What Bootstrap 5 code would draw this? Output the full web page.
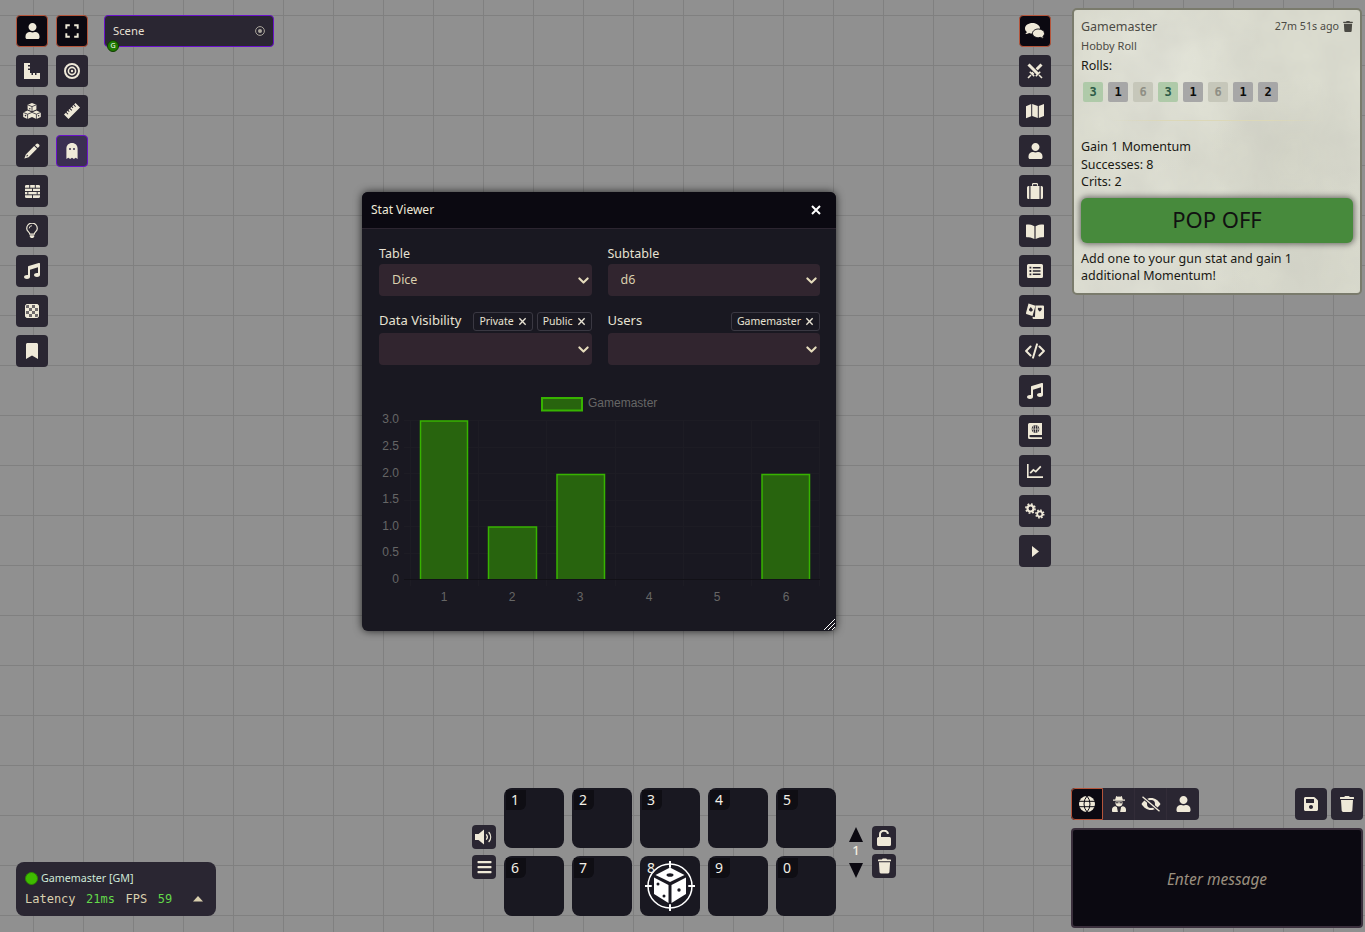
<!DOCTYPE html>
<html lang="en">
<head>
    <meta charset="UTF-8">
    <title>Stat Viewer</title>
    <link href="https://cdn.jsdelivr.net/npm/bootstrap@5.3.2/dist/css/bootstrap.min.css" rel="stylesheet">
    <script src="https://cdn.jsdelivr.net/npm/bootstrap@5.3.2/dist/js/bootstrap.bundle.min.js"></script>
    <style>
        html, body { height: 100%; overflow: hidden; }
        body {
            font-family: "Noto Sans", "Open Sans", sans-serif;
            font-size: 13px;
            color: #efe9d8;
            background-color: #909090;
            background-image:
                linear-gradient(to right, #808080 1px, transparent 1px),
                linear-gradient(to bottom, #808080 1px, transparent 1px);
            background-size: 50px 50px;
            background-position: 33px 15px;
        }
        .ico { display: block; fill: currentColor; --hole: #2a2632; }
        .hud-root { height: 932px; }
        .top-bar { padding-right: 3px; }
        .tool-area { padding: 15px 0 0 16px; gap: 8px; }
        .tool-col { gap: 8px; width: 32px; }
        .tool-btn {
            width: 32px; height: 32px;
            background: #2a2632;
            border-radius: 4px;
            color: #efe9d8;
            border: 0;
            padding: 0;
        }
        .tool-btn.is-on { background: #0b0911; border: 1px solid #b5543a; }
        .tool-btn.is-on .ico { --hole: #0b0911; }
        .tool-btn.is-layer { background: #3b2f52; border: 1px solid #6a11cb; }
        .tool-btn.is-layer .ico { --hole: #3b2f52; }
        .scene-box {
            width: 170px; height: 32px;
            margin-left: 8px;
            background: #2a2632;
            border: 1px solid #6a11cb;
            border-radius: 4px;
            padding: 0 8px;
            font-size: 11.3px;
            color: #e4dfd0;
        }
        .scene-pin {
            position: absolute; left: 2px; bottom: -6px;
            width: 12px; height: 12px;
            border-radius: 50%;
            background: #1e7a00;
            border: 1px solid #0f3d00;
            color: #fff;
            font-size: 7px;
            line-height: 10px;
            text-align: center;
        }
        .side-col { gap: 8px; width: 32px; margin-top: 15px; margin-right: 21px; }
        .chat-card {
            width: 290px; height: 287px;
            margin-top: 8px;
            padding: 8px 7px 0 7px;
            border: 2px solid #7a7b6c;
            border-radius: 5px;
            color: #191813;
            font-size: 12.5px;
            line-height: 17.5px;
            background-color: #dcddd0;
            background-image:
                url("data:image/svg+xml,%3csvg xmlns='http://www.w3.org/2000/svg' width='290' height='287'%3e%3cfilter id='n'%3e%3cfeTurbulence type='fractalNoise' baseFrequency='.02' numOctaves='4'/%3e%3cfeColorMatrix values='0 0 0 0 .55 0 0 0 0 .55 0 0 0 0 .5 0 0 0 .5 -.1'/%3e%3c/filter%3e%3crect width='290' height='287' filter='url(%23n)'/%3e%3c/svg%3e"),
                radial-gradient(circle at 30% 20%, #e4e5da 0, transparent 35%),
                radial-gradient(circle at 75% 50%, #d2d3c6 0, transparent 30%),
                radial-gradient(circle at 20% 85%, #e2e3d8 0, transparent 35%),
                radial-gradient(circle at 85% 90%, #d6d7ca 0, transparent 30%);
        }
        .msg-sender { font-size: 12.5px; color: #4b4a44; }
        .msg-time { font-size: 10.7px; color: #4b4a44; }
        .msg-flavor { font-size: 11px; color: #4b4a44; margin-top: 2px; line-height: 16px; }
        .roll-line { margin-top: 3px; }
        .dice-row { gap: 5px; margin: 8px 0 0 2px; }
        .die-chip {
            width: 20px; height: 20px;
            border-radius: 2px;
            font-family: "DejaVu Sans Mono", monospace;
            font-weight: 700;
            font-size: 12px;
            line-height: 20px;
            text-align: center;
            background: #a7a7a7;
            color: #0c0c0c;
        }
        .die-chip.is-hit { background: #afcaa9; color: #2e5c48; }
        .die-chip.is-dim { background: #c6c7ba; color: #8f8f85; }
        .msg-rule {
            height: 1px;
            margin: 18px 30px 17px 30px;
            background: linear-gradient(to right, transparent, #dcd8b8 25%, #dcd8b8 75%, transparent);
        }
        .pop-btn {
            display: block; width: 100%; height: 45px;
            margin: 7px 0 7px 0;
            background: #478a3c;
            border: 0;
            border-radius: 6px;
            color: #111;
            font-size: 22px;
            box-shadow: 0 0 6px 1px rgba(0,0,0,.55);
        }
        .stat-window {
            position: absolute; left: 362px; top: 192px;
            width: 474px; height: 439px;
            background: #191821;
            border-radius: 6px;
            box-shadow: 0 0 8px rgba(0,0,0,.75);
            overflow: hidden;
        }
        .stat-head {
            height: 37px;
            padding: 0 9px;
            background: #0b0911;
            border-bottom: 1px solid #2c2530;
            font-size: 12px;
            color: #efe9d8;
        }
        .close-x { width: 22px; height: 22px; color: #fff; }
        .stat-body { padding: 16px 16px 0 17px; }
        .stat-row { --bs-gutter-x: 16px; margin-bottom: 14px; }
        .field-label { font-size: 12.5px; height: 17px; line-height: 17px; color: #e7e2d3; margin-bottom: 2px; }
        .field-label.is-tags { height: 22px; line-height: 20px; margin: 0 0 1px 0; font-size: 13px; align-items: flex-start; }
        .stat-select.form-select {
            height: 32px;
            padding: 1px 24px 0 13px;
            background-color: #31252f;
            border: 0;
            border-radius: 4px;
            color: #d9cfae;
            font-size: 12.5px;
            font-family: inherit;
            background-size: 11px 11px;
            background-position: right 3px center;
            background-image: url("data:image/svg+xml,%3csvg xmlns='http://www.w3.org/2000/svg' viewBox='0 0 16 16'%3e%3cpath fill='none' stroke='%23e6dcbc' stroke-linecap='round' stroke-linejoin='round' stroke-width='3' d='m2 5 6 6 6-6'/%3e%3c/svg%3e");
        }
        .tag-chip {
            height: 19px;
            margin-top: 2px;
            padding: 0 5px;
            border: 1px solid #3a3842;
            border-radius: 3px;
            font-size: 10.5px;
            line-height: 17px;
            color: #e7e2d3;
            gap: 4px;
        }
        .chart-svg { display: block; position: absolute; left: 0; top: 192px; }
        .chart-svg text { font-family: "Liberation Sans", sans-serif; font-size: 12px; fill: #666; }
        .grip {
            position: absolute; right: 1px; bottom: 1px;
            color: #fff;
        }
        .bottom-bar { padding: 0 2px 4px 0; }
        .status-box {
            width: 200px; height: 54px;
            margin: 0 0 12px 16px;
            padding: 8px 9px 0 9px;
            background: #2a2632;
            border-radius: 8px;
            font-size: 10.7px;
        }
        .status-dot { width: 13px; height: 13px; border-radius: 50%; background: #3fbb00; border: 1px solid #2b8a00; margin-right: 3px; }
        .status-name { color: #cfe8d8; }
        .status-stats {
            margin-top: 4px;
            gap: 10.5px;
            font-family: "DejaVu Sans Mono", monospace;
            font-size: 12px;
            color: #d9cfae;
        }
        .status-stats b { font-weight: 400; color: #63d94a; }
        .hot-zone { margin: 0 0 12px 256px; }
        .mini-col { gap: 6px; margin-right: 8px; margin-bottom: 37px; }
        .mini-btn { width: 24px; height: 24px; background: #2a2632; border-radius: 4px; color: #efe9d8; }
        .slot-grid { display: grid; grid-template-columns: repeat(5, 60px); grid-auto-rows: 60px; gap: 8px; }
        .hot-slot {
            position: relative;
            background: #191821;
            border-radius: 8px;
            overflow: hidden;
        }
        .slot-num {
            position: absolute; left: 2px; top: 2px;
            width: 20px; height: 20px;
            padding-left: 5px;
            background: #0f0e14;
            border-radius: 0 0 6px 0;
            font-size: 14px;
            line-height: 20px;
            color: #f2efe6;
            z-index: 1;
        }
        .slot-num.is-bare { background: none; }
        .slot-img { position: absolute; left: 5px; top: 5px; color: #fff; }
        .page-col { width: 20px; margin: 0 6px 38px 10px; }
        .page-num { font-size: 13px; line-height: 21px; font-weight: 500; color: #f2eee0; margin-top: -2px; margin-bottom: 2px; }
        .page-arrow { color: #0b0911; }
        .lock-col { gap: 4px; margin-bottom: 38px; }
        .chat-zone { margin-left: auto; width: 292px; }
        .tab-group { background: #2a2632; border-radius: 4px; height: 32px; }
        .tab-item { width: 32px; height: 32px; color: #efe9d8; border-right: 1px solid #322c38; }
        .tab-item:last-child { border-right: 0; }
        .tab-item.is-on { background: #0b0911; border: 1px solid #b5543a; border-radius: 4px 0 0 4px; }
        .tab-item.is-on .ico { --hole: #0b0911; }
        .msg-input {
            height: 100px;
            margin-top: 8px;
            padding-top: 3px;
            background: #0b0911;
            border: 2px solid #3a2f3c;
            border-radius: 4px;
            font-style: italic;
            font-size: 15.5px;
            color: #9a8f7f;
        }
    </style>
</head>
<body>

<svg width="0" height="0" class="position-absolute">
  <defs>
    <symbol id="i-user" viewBox="0 0 448 512"><path d="M224 256c70.7 0 128-57.3 128-128S294.7 0 224 0 96 57.3 96 128s57.3 128 128 128zm89.6 32h-16.7c-22.2 10.2-46.9 16-72.9 16s-50.6-5.8-72.9-16h-16.7C60.2 288 0 348.2 0 422.4V464c0 26.5 21.5 48 48 48h352c26.5 0 48-21.5 48-48v-41.6c0-74.2-60.2-134.4-134.4-134.4z"/></symbol>
    <symbol id="i-trash" viewBox="0 0 448 512"><path d="M432 32H312l-9.4-18.7A24 24 0 0 0 281.1 0H166.8a23.72 23.72 0 0 0-21.4 13.3L136 32H16A16 16 0 0 0 0 48v32a16 16 0 0 0 16 16h416a16 16 0 0 0 16-16V48a16 16 0 0 0-16-16zM53.2 467a48 48 0 0 0 47.9 45h245.8a48 48 0 0 0 47.9-45L416 128H32z"/></symbol>
    <symbol id="i-bars" viewBox="0 0 448 512"><path d="M16 132h416c8.837 0 16-7.163 16-16V76c0-8.837-7.163-16-16-16H16C7.163 60 0 67.163 0 76v40c0 8.837 7.163 16 16 16zm0 160h416c8.837 0 16-7.163 16-16v-40c0-8.837-7.163-16-16-16H16c-8.837 0-16 7.163-16 16v40c0 8.837 7.163 16 16 16zm0 160h416c8.837 0 16-7.163 16-16v-40c0-8.837-7.163-16-16-16H16c-8.837 0-16 7.163-16 16v40c0 8.837 7.163 16 16 16z"/></symbol>
    <symbol id="i-music" viewBox="0 0 512 512"><path d="M470.38 1.51L150.41 96A32 32 0 0 0 128 126.51v261.41A139 139 0 0 0 96 384c-53 0-96 28.66-96 64s43 64 96 64 96-28.66 96-64V214.32l256-75v184.61a138.4 138.4 0 0 0-32-3.93c-53 0-96 28.66-96 64s43 64 96 64 96-28.65 96-64V32a32 32 0 0 0-41.62-30.49z"/></symbol>
    <symbol id="i-bookmark" viewBox="0 0 384 512"><path d="M0 512V48C0 21.49 21.49 0 48 0h288c26.51 0 48 21.49 48 48v464L192 400 0 512z"/></symbol>
    <symbol id="i-save" viewBox="0 0 448 512"><path d="M433.941 129.941l-83.882-83.882A48 48 0 0 0 316.118 32H48C21.49 32 0 53.49 0 80v352c0 26.51 21.49 48 48 48h352c26.51 0 48-21.49 48-48V163.882a48 48 0 0 0-14.059-33.941zM224 416c-35.346 0-64-28.654-64-64 0-35.346 28.654-64 64-64s64 28.654 64 64c0 35.346-28.654 64-64 64zm96-304.52V212c0 6.627-5.373 12-12 12H76c-6.627 0-12-5.373-12-12V108c0-6.627 5.373-12 12-12h228.52c3.183 0 6.235 1.264 8.485 3.515l3.48 3.48A11.996 11.996 0 0 1 320 111.48z"/></symbol>
    <symbol id="i-expand" viewBox="0 0 16 16"><path fill="none" stroke="currentColor" stroke-width="2.2" d="M1.5 5.5v-4h4M10.5 1.5h4v4M14.5 10.5v4h-4M5.5 14.5h-4v-4"/></symbol>
    <symbol id="i-ruler-l" viewBox="0 0 16 16"><path d="M0 0h6v2H4v1.500h2v2H4V7h2v3h1.500v2H9v-2h2v2h1.500v-2H16v6H0z"/></symbol>
    <symbol id="i-target" viewBox="0 0 16 16"><circle cx="8" cy="8" r="7" fill="none" stroke="currentColor" stroke-width="2"/><circle cx="8" cy="8" r="3.6" fill="none" stroke="currentColor" stroke-width="1.6"/><circle cx="8" cy="8" r="1.2"/></symbol>
    <symbol id="i-cubes" viewBox="0 0 18 16"><path d="M9 0l4.4 1.8v4.6L9 8.2 4.6 6.4V1.8z"/><path d="M4.6 7.6L9 9.4V14l-4.4 2L.2 14V9.4z"/><path d="M13.4 7.6L17.8 9.4V14l-4.4 2L9 14V9.4z"/><path fill="none" stroke="var(--hole)" stroke-width=".8" d="M4.6 1.8L9 3.6l4.4-1.8M9 3.6v4.6M.2 9.4l4.4 1.8L9 9.4M4.6 11.2V16M9 9.4l4.4 1.8 4.4-1.8M13.4 11.2V16"/><circle cx="2.5" cy="12.6" r=".8" fill="var(--hole)"/><circle cx="15.6" cy="12.8" r=".8" fill="var(--hole)"/><circle cx="6.8" cy="5.8" r=".7" fill="var(--hole)"/></symbol>
    <symbol id="i-ruler-d" viewBox="0 0 16 16"><path d="M11.5 0L16 4.5 4.5 16 0 11.5l1.8-1.8 1.9 1.9.7-.7-1.9-1.9 1.2-1.2 1.2 1.2.7-.7-1.2-1.2 1.2-1.2 1.9 1.9.7-.7-1.9-1.9 1.2-1.2 1.2 1.2.7-.7-1.2-1.2 1.2-1.2 1.9 1.9.7-.7-1.9-1.9z"/></symbol>
    <symbol id="i-pencil" viewBox="0 0 16 16"><path d="M11 2.2l1.2-1.2a1.6 1.6 0 0 1 2.2 0l.6.6a1.6 1.6 0 0 1 0 2.2L13.8 5z"/><path fill-rule="evenodd" d="M10.2 3l2.8 2.8-8.4 8.4L.4 15.6l1.4-4.2zM3 11.6l-.7 2 2-.7z"/></symbol>
    <symbol id="i-ghost" viewBox="0 0 16 16"><path d="M8 0C4.6 0 2.4 2.4 2.4 5.6V16l1.9-1.3L6.1 16 8 14.7 9.9 16l1.8-1.3 1.9 1.3V5.6C13.6 2.4 11.4 0 8 0z"/><circle cx="6" cy="6" r="1" fill="var(--hole)"/><circle cx="10" cy="6" r="1" fill="var(--hole)"/></symbol>
    <symbol id="i-brick" viewBox="0 0 16 16"><path d="M1.5 1h13A1.5 1.5 0 0 1 16 2.5v11a1.5 1.5 0 0 1-1.5 1.5h-13A1.5 1.5 0 0 1 0 13.500v-11A1.500 1.500 0 0 1 1.500 1z"/><path fill="none" stroke="var(--hole)" d="M0 4.500h16M0 8h16M0 11.500h16M5 1v3.500M11 1v3.500M8 4.500V8M3 8v3.500M13 8v3.500M8 11.500V15"/></symbol>
    <symbol id="i-bulb" viewBox="0 0 12 16"><path fill="none" stroke="currentColor" stroke-width="1.200" d="M3.800 11.200c0-1.800-3.100-3-3.100-5.800a5.300 5.300 0 0 1 10.600 0c0 2.800-3.100 4-3.100 5.800z"/><path d="M3.800 12.300h4.400v1.300l-1 1.500H4.800l-1-1.500z"/><path fill="none" stroke="currentColor" stroke-width=".9" d="M3.200 5.400A2.800 2.800 0 0 1 6 2.700"/></symbol>
    <symbol id="i-checker" viewBox="0 0 14 14"><rect x=".5" y=".5" width="13" height="13" rx="1.500" fill="none" stroke="currentColor"/><path d="M1 1h3v3H1zM7 1h3v3H7zM4 4h3v3H4zM10 4h3v3h-3zM1 7h3v3H1zM7 7h3v3H7zM4 10h3v3H4zM10 10h3v3h-3z" opacity=".35"/><path d="M4 1h3v3H4zM10 1h3v3h-3zM1 4h3v3H1zM7 4h3v3H7zM4 7h3v3H4zM10 7h3v3h-3zM1 10h3v3H1zM7 10h3v3H7z"/></symbol>
    <symbol id="i-chat" viewBox="0 0 20 16"><path d="M7.500 0C3.400 0 0 2.400 0 5.400c0 1.400.7 2.600 1.900 3.600-.3.800-.9 1.500-1.600 2.100 1.500 0 2.700-.5 3.700-1.200 1.100.4 2.300.7 3.500.7 4.100 0 7.500-2.400 7.500-5.200S11.600 0 7.500 0z"/><path stroke="var(--hole)" stroke-width="1" d="M13.500 6c-3 0-6 1.700-6 4.400 0 2.500 2.800 4.300 6 4.300.7 0 1.500-.1 2.200-.3.900.7 2 1.200 3.500 1.200-.7-.6-1.200-1.300-1.400-2 1-.8 1.700-1.900 1.700-3.200C19.500 7.700 16.500 6 13.500 6z"/></symbol>
    <symbol id="i-swords" viewBox="0 0 16 16">
      <path fill="none" stroke="currentColor" stroke-width="3" d="M14.500 1.500L5 11"/>
      <path fill="none" stroke="currentColor" stroke-width="1.600" d="M2.800 8.800l4.400 4.400M4 12l-3 3"/>
      <path fill="none" stroke="var(--hole)" stroke-width="4.600" d="M1.500 1.500L11 11"/>
      <path fill="none" stroke="currentColor" stroke-width="3" d="M1.500 1.500L11 11"/>
      <path fill="none" stroke="currentColor" stroke-width="1.600" d="M13.200 8.800l-4.400 4.400M12 12l3 3"/>
    </symbol>
    <symbol id="i-map" viewBox="0 0 18 16"><path d="M0 3.200L5.200 1v12.200L0 15.200zM6.200 1l5.600 2v12l-5.600-2zM12.800 3L18 .9v12L12.800 15z"/></symbol>
    <symbol id="i-case" viewBox="0 0 16 16"><path d="M5 2.800V1.300C5 .6 5.600 0 6.300 0h3.400c.7 0 1.300.6 1.300 1.300v1.500H9.900V1.200H6.100v1.600z"/><path d="M3.500 3H12.500V16H3.500zM2.300 3v13H1.500A1.500 1.500 0 0 1 0 14.500v-10A1.500 1.500 0 0 1 1.500 3zM13.700 3h.8A1.500 1.500 0 0 1 16 4.500v10a1.500 1.500 0 0 1-1.500 1.500h-.8z"/></symbol>
    <symbol id="i-book" viewBox="0 0 18 15"><path d="M8.400 2.200v12.800C6 13.500 3 13.200.6 13.200.3 13.200 0 13 0 12.600V1c0-.3.300-.6.600-.6 3 0 6 .4 7.800 1.800zM9.600 2.200v12.800c2.400-1.500 5.400-1.800 7.800-1.800.3 0 .6-.2.600-.6V1c0-.3-.3-.6-.6-.6-3 0-6 .4-7.800 1.800z"/></symbol>
    <symbol id="i-list" viewBox="0 0 16 14"><path fill-rule="evenodd" d="M1.500 0h13A1.500 1.500 0 0 1 16 1.500v11a1.500 1.500 0 0 1-1.500 1.500h-13A1.500 1.500 0 0 1 0 12.500v-11A1.500 1.500 0 0 1 1.500 0zM2.500 2.800v1.800h1.800V2.800zM5.800 3v1.400h7.700V3zM2.500 6.100v1.800h1.800V6.100zM5.800 6.300v1.400h7.700V6.300zM2.500 9.400v1.800h1.800V9.400zM5.800 9.600V11h7.700V9.600z"/></symbol>
    <symbol id="i-cards" viewBox="0 0 18 16"><path d="M2.500.6l7 2.200-3 10.200-6.300-2-.2-1z"/><path d="M9.600 2.500H17a1 1 0 0 1 1 1V15a1 1 0 0 1-1 1H7.600a1 1 0 0 1-1-1v-1.200l1.200.3a1 1 0 0 0 1.200-.7z"/><path fill="var(--hole)" d="M4.800 4l1.700 2.200c.5.700.3 1.600-.4 1.800-.3.100-.6 0-.8-.1l.3 1-1.300-.4.300-.7c-.3.200-.6.200-.9.100-.8-.3-.9-1.100-.5-1.800zM13.800 5.200c.7-.8 2-.3 2 .7 0 .8-1 1.600-2 2.600-1-.9-2-1.800-2-2.600 0-1 1.300-1.500 2-.7z"/></symbol>
    <symbol id="i-code" viewBox="0 0 18 14"><path fill="none" stroke="currentColor" stroke-width="1.800" stroke-linecap="round" stroke-linejoin="round" d="M5 3L1 7l4 4M13 3l4 4-4 4M10.800 1L7.200 13"/></symbol>
    <symbol id="i-atlas" viewBox="0 0 14 16"><path fill-rule="evenodd" d="M1.500 0H14v12H2.500a1.100 1.100 0 0 0 0 2.200H14V16H1.500A1.500 1.500 0 0 1 0 14.500v-13A1.500 1.500 0 0 1 1.500 0zM7.500 2.300a3.800 3.800 0 1 0 0 7.600 3.800 3.800 0 0 0 0-7.600z"/><path fill="none" stroke="currentColor" stroke-width=".7" d="M7.500 2.500v7.200M4 6.100h7M5.800 3a6 6 0 0 0 0 6.200M9.200 3a6 6 0 0 1 0 6.200"/></symbol>
    <symbol id="i-chart" viewBox="0 0 16 14"><path d="M0 0h1.600v12.200H16V14H0z"/><path fill="none" stroke="currentColor" stroke-width="1.700" d="M3.200 9.200l3.200-3.400 2.400 1.800L13.800 2.400"/></symbol>
    <symbol id="i-cogs" viewBox="0 0 20 16"><circle cx="5.500" cy="5.500" r="3" fill="none" stroke="currentColor" stroke-width="2.200"/><circle cx="5.500" cy="5.500" r="4.600" fill="none" stroke="currentColor" stroke-width="1.600" stroke-dasharray="1.800 1.800"/><circle cx="14.800" cy="11" r="2.600" fill="none" stroke="currentColor" stroke-width="1.800"/><circle cx="14.800" cy="11" r="3.900" fill="none" stroke="currentColor" stroke-width="1.600" stroke-dasharray="1.530 1.530"/></symbol>
    <symbol id="i-globe" viewBox="0 0 16 16"><circle cx="8" cy="8" r="8"/><path fill="none" stroke="var(--hole)" stroke-width="1" d="M0 5.300h16M0 10.700h16M8 0a12 12 0 0 0-3 8 12 12 0 0 0 3 8 12 12 0 0 0 3-8 12 12 0 0 0-3-8z"/></symbol>
    <symbol id="i-secret" viewBox="0 0 14 16"><path d="M4.200 0L5.800 .8 7 .4l1.200.4L9.800 0l1 3.400H13v1.300H1V3.400h2.200z"/><path d="M3.500 5.500h7v1.800c0 2-1.500 3.300-3.500 3.300S3.500 9.300 3.500 7.300z"/><path d="M3.400 10.200l1.500.7 1 5.100H1.100A1 1 0 0 1 0 15v-1.400c0-1.800 1.500-3.400 3.400-3.400zM10.600 10.200c1.900 0 3.400 1.600 3.400 3.400V15a1 1 0 0 1-1.100 1H8.100l1-5.100z"/><path fill="var(--hole)" d="M3.900 6.200h2.600v1H3.900zM7.500 6.200h2.600v1H7.500z"/></symbol>
    <symbol id="i-eyeoff" viewBox="0 0 20 16"><path fill-rule="evenodd" d="M10 2c4 0 7.500 2.600 9.500 6-2 3.400-5.500 6-9.500 6s-7.500-2.600-9.500-6c2-3.400 5.500-6 9.500-6zm0 2a4 4 0 1 0 0 8 4 4 0 0 0 0-8z"/><path fill="none" stroke="var(--hole)" stroke-width="3.200" d="M1.500 0.800l17 14.400"/><path fill="none" stroke="currentColor" stroke-width="1.300" d="M1.500 0.800l17 14.400"/></symbol>
    <symbol id="i-volume" viewBox="0 0 18 16"><path d="M0 5h3.500L9 .6v14.800L3.500 11H0z"/><path fill="none" stroke="currentColor" stroke-width="1.300" stroke-linecap="round" d="M11.500 5.800a3.500 3.500 0 0 1 0 4.400M14 3.500a7 7 0 0 1 0 9"/></symbol>
    <symbol id="i-lock" viewBox="0 0 14 16"><path d="M1.500 7h11A1.500 1.500 0 0 1 14 8.500v6a1.500 1.500 0 0 1-1.500 1.500h-11A1.500 1.500 0 0 1 0 14.500v-6A1.500 1.500 0 0 1 1.500 7z"/><path fill="none" stroke="currentColor" stroke-width="2" d="M3 7V4.500a4 3.500 0 0 1 8-.6"/></symbol>
    <symbol id="i-d6" viewBox="0 0 50 50">
      <circle cx="25" cy="25" r="22" fill="none" stroke="currentColor" stroke-width="1.500"/>
      <path fill="none" stroke="currentColor" stroke-width="2" stroke-linecap="round" d="M25 0v6M25 44v6M0 25h6M44 25h6"/>
      <path d="M25 6.500l14.500 7.500L25 21 10.500 14z"/>
      <path d="M9 16.500l14.500 7.500v18L9 33z"/>
      <path d="M26.500 24L41 16.500V33l-14.500 9z"/>
      <ellipse cx="25" cy="14" rx="3.500" ry="1.800" fill="#191821"/>
      <circle cx="13" cy="23" r="1.500" fill="#191821"/><circle cx="19" cy="35" r="1.500" fill="#191821"/>
      <circle cx="34" cy="29" r="1.700" fill="#191821"/>
    </symbol>
    <symbol id="i-x" viewBox="0 0 10 10"><path fill="none" stroke="currentColor" stroke-width="1.500" d="M1.500 1.500l7 7M8.500 1.500l-7 7"/></symbol>
  </defs>
</svg>

<div class="hud-root d-flex flex-column justify-content-between">
  <div class="top-bar d-flex justify-content-between align-items-start">
    <div class="tool-area d-flex">
      <div class="tool-col d-flex flex-column">
        <div class="tool-btn is-on d-flex align-items-center justify-content-center"><svg class="ico" width="15" height="16"><use href="#i-user"/></svg></div>
        <div class="tool-btn d-flex align-items-center justify-content-center"><svg class="ico" width="16" height="16"><use href="#i-ruler-l"/></svg></div>
        <div class="tool-btn d-flex align-items-center justify-content-center"><svg class="ico" width="18" height="16"><use href="#i-cubes"/></svg></div>
        <div class="tool-btn d-flex align-items-center justify-content-center"><svg class="ico" width="16" height="16"><use href="#i-pencil"/></svg></div>
        <div class="tool-btn d-flex align-items-center justify-content-center"><svg class="ico" width="15" height="15"><use href="#i-brick"/></svg></div>
        <div class="tool-btn d-flex align-items-center justify-content-center"><svg class="ico" width="12" height="16"><use href="#i-bulb"/></svg></div>
        <div class="tool-btn d-flex align-items-center justify-content-center"><svg class="ico" width="16" height="16"><use href="#i-music"/></svg></div>
        <div class="tool-btn d-flex align-items-center justify-content-center"><svg class="ico" width="14" height="14"><use href="#i-checker"/></svg></div>
        <div class="tool-btn d-flex align-items-center justify-content-center"><svg class="ico" width="12" height="16"><use href="#i-bookmark"/></svg></div>
      </div>
      <div class="tool-col d-flex flex-column">
        <div class="tool-btn is-on d-flex align-items-center justify-content-center"><svg class="ico" width="14" height="14"><use href="#i-expand"/></svg></div>
        <div class="tool-btn d-flex align-items-center justify-content-center"><svg class="ico" width="16" height="16"><use href="#i-target"/></svg></div>
        <div class="tool-btn d-flex align-items-center justify-content-center"><svg class="ico" width="16" height="16"><use href="#i-ruler-d"/></svg></div>
        <div class="tool-btn is-layer d-flex align-items-center justify-content-center"><svg class="ico" width="16" height="16"><use href="#i-ghost"/></svg></div>
      </div>
      <div class="scene-box position-relative d-flex align-items-center justify-content-between">
        <span>Scene</span>
        <svg width="10" height="10" viewBox="0 0 10 10" class="ico"><circle cx="5" cy="5" r="4.400" fill="none" stroke="#aaa69c"/><circle cx="5" cy="5" r="2" fill="#aaa69c"/></svg>
        <span class="scene-pin">G</span>
      </div>
    </div>

    <div class="d-flex align-items-start">
      <div class="side-col d-flex flex-column">
        <div class="tool-btn is-on d-flex align-items-center justify-content-center"><svg class="ico" width="20" height="16"><use href="#i-chat"/></svg></div>
        <div class="tool-btn d-flex align-items-center justify-content-center"><svg class="ico" width="16" height="16"><use href="#i-swords"/></svg></div>
        <div class="tool-btn d-flex align-items-center justify-content-center"><svg class="ico" width="18" height="16"><use href="#i-map"/></svg></div>
        <div class="tool-btn d-flex align-items-center justify-content-center"><svg class="ico" width="15" height="16"><use href="#i-user"/></svg></div>
        <div class="tool-btn d-flex align-items-center justify-content-center"><svg class="ico" width="16" height="16"><use href="#i-case"/></svg></div>
        <div class="tool-btn d-flex align-items-center justify-content-center"><svg class="ico" width="18" height="15"><use href="#i-book"/></svg></div>
        <div class="tool-btn d-flex align-items-center justify-content-center"><svg class="ico" width="16" height="14"><use href="#i-list"/></svg></div>
        <div class="tool-btn d-flex align-items-center justify-content-center"><svg class="ico" width="18" height="16"><use href="#i-cards"/></svg></div>
        <div class="tool-btn d-flex align-items-center justify-content-center"><svg class="ico" width="20" height="16"><use href="#i-code"/></svg></div>
        <div class="tool-btn d-flex align-items-center justify-content-center"><svg class="ico" width="16" height="16"><use href="#i-music"/></svg></div>
        <div class="tool-btn d-flex align-items-center justify-content-center"><svg class="ico" width="14" height="16"><use href="#i-atlas"/></svg></div>
        <div class="tool-btn d-flex align-items-center justify-content-center"><svg class="ico" width="16" height="14"><use href="#i-chart"/></svg></div>
        <div class="tool-btn d-flex align-items-center justify-content-center"><svg class="ico" width="20" height="16"><use href="#i-cogs"/></svg></div>
        <div class="tool-btn d-flex align-items-center justify-content-center"><svg class="ico" width="7" height="11" viewBox="0 0 7 11"><path d="M0 0l7 5.500L0 11z"/></svg></div>
      </div>

      <div class="chat-card">
        <div class="d-flex justify-content-between align-items-center">
          <span class="msg-sender">Gamemaster</span>
          <span class="msg-time d-flex align-items-center gap-1">27m 51s ago <svg class="ico" width="10" height="11"><use href="#i-trash"/></svg></span>
        </div>
        <div class="msg-flavor">Hobby Roll</div>
        <div class="roll-line">Rolls:</div>
        <div class="dice-row d-flex">
          <div class="die-chip is-hit">3</div><div class="die-chip">1</div><div class="die-chip is-dim">6</div><div class="die-chip is-hit">3</div>
          <div class="die-chip">1</div><div class="die-chip is-dim">6</div><div class="die-chip">1</div><div class="die-chip">2</div>
        </div>
        <div class="msg-rule"></div>
        <div>Gain 1 Momentum</div>
        <div>Successes: 8</div>
        <div>Crits: 2</div>
        <button class="pop-btn" type="button">POP OFF</button>
        <div>Add one to your gun stat and gain 1 additional Momentum!</div>
      </div>
    </div>
  </div>

  <div class="bottom-bar d-flex align-items-end">
    <div class="status-box">
      <div class="d-flex align-items-center"><span class="status-dot"></span><span class="status-name">Gamemaster [GM]</span></div>
      <div class="status-stats d-flex align-items-center">
        <span>Latency</span><b>21ms</b><span>FPS</span><b>59</b>
        <svg class="ico ms-auto me-1" width="10" height="6" viewBox="0 0 10 6"><path d="M5 0l5 5.500H0z"/></svg>
      </div>
    </div>

    <div class="hot-zone d-flex align-items-end">
      <div class="mini-col d-flex flex-column">
        <div class="mini-btn d-flex align-items-center justify-content-center"><svg class="ico" width="18" height="16"><use href="#i-volume"/></svg></div>
        <div class="mini-btn d-flex align-items-center justify-content-center"><svg class="ico" width="15" height="16"><use href="#i-bars"/></svg></div>
      </div>
      <div class="slot-grid">
        <div class="hot-slot"><span class="slot-num">1</span></div>
        <div class="hot-slot"><span class="slot-num">2</span></div>
        <div class="hot-slot"><span class="slot-num">3</span></div>
        <div class="hot-slot"><span class="slot-num">4</span></div>
        <div class="hot-slot"><span class="slot-num">5</span></div>
        <div class="hot-slot"><span class="slot-num">6</span></div>
        <div class="hot-slot"><span class="slot-num">7</span></div>
        <div class="hot-slot"><span class="slot-num is-bare">8</span><svg class="ico slot-img" width="50" height="50"><use href="#i-d6"/></svg></div>
        <div class="hot-slot"><span class="slot-num">9</span></div>
        <div class="hot-slot"><span class="slot-num">0</span></div>
      </div>
      <div class="page-col d-flex flex-column align-items-center">
        <svg class="ico page-arrow" width="14" height="15" viewBox="0 0 14 15"><path d="M7 0l7 15H0z"/></svg>
        <span class="page-num">1</span>
        <svg class="ico page-arrow" width="14" height="15" viewBox="0 0 14 15"><path d="M7 15L0 0h14z"/></svg>
      </div>
      <div class="lock-col d-flex flex-column">
        <div class="mini-btn d-flex align-items-center justify-content-center"><svg class="ico" width="14" height="16"><use href="#i-lock"/></svg></div>
        <div class="mini-btn d-flex align-items-center justify-content-center"><svg class="ico" width="13" height="16"><use href="#i-trash"/></svg></div>
      </div>
    </div>

    <div class="chat-zone">
      <div class="d-flex justify-content-between">
        <div class="tab-group d-flex">
          <div class="tab-item is-on d-flex align-items-center justify-content-center"><svg class="ico" width="16" height="16"><use href="#i-globe"/></svg></div>
          <div class="tab-item d-flex align-items-center justify-content-center"><svg class="ico" width="14" height="16"><use href="#i-secret"/></svg></div>
          <div class="tab-item d-flex align-items-center justify-content-center"><svg class="ico" width="20" height="16"><use href="#i-eyeoff"/></svg></div>
          <div class="tab-item d-flex align-items-center justify-content-center"><svg class="ico" width="15" height="16"><use href="#i-user"/></svg></div>
        </div>
        <div class="d-flex gap-1">
          <div class="tool-btn d-flex align-items-center justify-content-center"><svg class="ico" width="14" height="16"><use href="#i-save"/></svg></div>
          <div class="tool-btn d-flex align-items-center justify-content-center"><svg class="ico" width="14" height="16"><use href="#i-trash"/></svg></div>
        </div>
      </div>
      <div class="msg-input d-flex align-items-center justify-content-center">Enter message</div>
    </div>
  </div>
</div>

<div class="stat-window">
  <div class="stat-head d-flex align-items-center justify-content-between">
    <span>Stat Viewer</span>
    <svg class="ico close-x" viewBox="0 0 22 22"><path fill="none" stroke="currentColor" stroke-width="2" d="M7 7l8 8M15 7l-8 8"/></svg>
  </div>
  <div class="stat-body">
    <div class="row stat-row">
      <div class="col-6">
        <div class="field-label">Table</div>
        <select class="form-select stat-select"><option>Dice</option></select>
      </div>
      <div class="col-6">
        <div class="field-label">Subtable</div>
        <select class="form-select stat-select"><option>d6</option></select>
      </div>
    </div>
    <div class="row stat-row">
      <div class="col-6">
        <div class="field-label is-tags d-flex">
          <span class="me-auto">Data Visibility</span>
          <span class="tag-chip d-flex align-items-center me-1">Private <svg class="ico" width="9" height="9"><use href="#i-x"/></svg></span>
          <span class="tag-chip d-flex align-items-center">Public <svg class="ico" width="9" height="9"><use href="#i-x"/></svg></span>
        </div>
        <select class="form-select stat-select"><option></option></select>
      </div>
      <div class="col-6">
        <div class="field-label is-tags d-flex">
          <span class="me-auto">Users</span>
          <span class="tag-chip d-flex align-items-center">Gamemaster <svg class="ico" width="9" height="9"><use href="#i-x"/></svg></span>
        </div>
        <select class="form-select stat-select"><option></option></select>
      </div>
    </div>
  </div>
  <svg class="chart-svg" width="474" height="247" viewBox="362 384 474 247">
    <rect x="542" y="398" width="40" height="12.500" fill="#28640e" stroke="#37b300" stroke-width="2"/>
    <text x="588" y="407">Gamemaster</text>
    <g stroke="#1d1c24" fill="none">
      <path d="M410.500 420v166M478.500 420v166M546.500 420v166M615.500 420v166M683.500 420v166M751.500 420v166M819.500 420v166"/>
      <path d="M404 420.500h416M404 447.500h416M404 473.500h416M404 500.500h416M404 526.500h416M404 553.500h416"/>
      <path d="M404 579.500h416" stroke="#121117"/>
    </g>
    <g fill="#28640e" stroke="#37b300" stroke-width="1.500">
      <path d="M420.500 579V421h47v158"/>
      <path d="M488.500 579v-52h48v52"/>
      <path d="M557 579V474.500h47.500V579"/>
      <path d="M762 579V474.500h47.500V579"/>
    </g>
    <g text-anchor="end">
      <text x="399" y="423">3.0</text><text x="399" y="450">2.5</text><text x="399" y="477">2.0</text>
      <text x="399" y="503">1.5</text><text x="399" y="530">1.0</text><text x="399" y="556">0.5</text><text x="399" y="583">0</text>
    </g>
    <g text-anchor="middle">
      <text x="444" y="601">1</text><text x="512" y="601">2</text><text x="580" y="601">3</text>
      <text x="649" y="601">4</text><text x="717" y="601">5</text><text x="786" y="601">6</text>
    </g>
  </svg>
  <svg class="grip" width="11" height="11" viewBox="0 0 11 11"><path fill="none" stroke="currentColor" d="M0 11L11 0M4 11l7-7M8 11l3-3"/></svg>
</div>

</body>
</html>
